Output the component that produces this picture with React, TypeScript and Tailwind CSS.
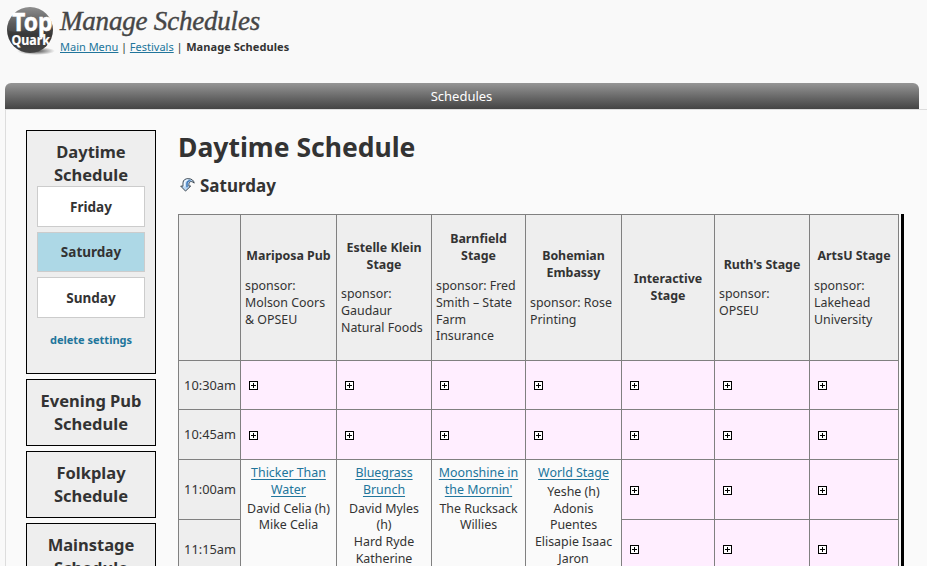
import { Fragment } from 'react';

type Stage = { name: string[]; sponsor: string[] };

const stages: Stage[] = [
  { name: ['Mariposa Pub'], sponsor: ['sponsor:', 'Molson Coors', '& OPSEU'] },
  { name: ['Estelle Klein', 'Stage'], sponsor: ['sponsor:', 'Gaudaur', 'Natural Foods'] },
  { name: ['Barnfield', 'Stage'], sponsor: ['sponsor: Fred', 'Smith – State', 'Farm', 'Insurance'] },
  { name: ['Bohemian', 'Embassy'], sponsor: ['sponsor: Rose', 'Printing'] },
  { name: ['Interactive', 'Stage'], sponsor: [] },
  { name: ["Ruth's Stage"], sponsor: ['sponsor:', 'OPSEU'] },
  { name: ['ArtsU Stage'], sponsor: ['sponsor:', 'Lakehead', 'University'] },
];

const shows = [
  { title: ['Thicker Than', 'Water'], acts: ['David Celia (h)', 'Mike Celia'] },
  { title: ['Bluegrass', 'Brunch'], acts: ['David Myles', '(h)', 'Hard Ryde', 'Katherine'] },
  { title: ['Moonshine in', "the Mornin'"], acts: ['The Rucksack', 'Willies'] },
  { title: ['World Stage'], acts: ['Yeshe (h)', 'Adonis', 'Puentes', 'Elisapie Isaac', 'Jaron'] },
];

const cell = 'border-l border-t border-[#808080]';

function Lines({ items }: { items: string[] }) {
  return (
    <>
      {items.map((t) => (
        <span key={t} className="block whitespace-nowrap">{t}</span>
      ))}
    </>
  );
}

function Slot({ last = false }: { last?: boolean }) {
  return (
    <div className={`${cell} flex items-center bg-[#ffeeff] pl-2 ${last ? 'pb-px' : 'pt-px'}`}>
      <svg width="9" height="9" viewBox="0 0 9 9" shapeRendering="crispEdges">
        <rect x="0.5" y="0.5" width="8" height="8" fill="#fff" stroke="#000" />
        <path d="M2 4.5h5M4.5 2v5" stroke="#000" />
      </svg>
    </div>
  );
}

function Time({ children }: { children: string }) {
  return <div className={`${cell} flex items-center justify-center bg-[#eeeeee] pl-px text-[12.8px]`}>{children}</div>;
}

function Logo() {
  return (
    <svg width="52" height="52" viewBox="0 0 52 52" className="shrink-0">
      <defs>
        <linearGradient id="ball" x1="0" y1="0" x2="0" y2="1">
          <stop offset="0" stopColor="#858585" />
          <stop offset="0.35" stopColor="#505050" />
          <stop offset="0.6" stopColor="#383838" />
          <stop offset="1" stopColor="#444" />
        </linearGradient>
        <radialGradient id="shade">
          <stop offset="0" stopColor="#000" stopOpacity="0.7" />
          <stop offset="1" stopColor="#000" stopOpacity="0" />
        </radialGradient>
      </defs>
      <ellipse cx="31" cy="46" rx="19" ry="4" fill="url(#shade)" />
      <circle cx="25" cy="25" r="23" fill="url(#ball)" />
      <path d="M2.5 25C12 30 22 22 47 22A22 22 0 0 0 3 22Z" fill="#fff" opacity="0.08" />
      <text x="7" y="25.5" textLength="40.5" lengthAdjust="spacingAndGlyphs" fill="#fff" stroke="#fff" strokeWidth="0.5" fontFamily="Noto Sans, sans-serif" fontWeight="700" fontSize="25">Top</text>
      <text x="6.5" y="39.5" textLength="38.5" lengthAdjust="spacingAndGlyphs" fill="#fff" stroke="#fff" strokeWidth="0.2" fontFamily="Noto Sans, sans-serif" fontWeight="700" fontSize="13.5">Quark</text>
    </svg>
  );
}

function Undo() {
  return (
    <svg width="15" height="14" viewBox="0 0 15 15" preserveAspectRatio="none">
      <path d="M.7 8.7H3V5.2C3 2.2 5.3.7 8.2.7c3.2 0 5.7 1.8 6 4.8-1.5-1.7-3.5-2.2-4.3-1.2-1 .8-1 2-1 4.4h1.8L5.5 14Z" fill="#b9d8f5" stroke="#39434e" strokeWidth="1" />
      <path d="M4.5 9V5.5C4.5 3.6 6.2 2.2 8 2" fill="none" stroke="#f2f8ff" strokeWidth="1.5" />
      <path d="M7 10V6C7 4 8 3 10.5 2.8" fill="none" stroke="#3f78b8" strokeWidth="1.5" />
    </svg>
  );
}

function Day({ name, active = false }: { name: string; active?: boolean }) {
  return (
    <div className={`flex items-center justify-center border border-[#cccccc] text-[13.5px] font-bold ${active ? 'h-[40px] bg-[#add8e6]' : 'h-[41px] bg-white pt-px'}`}>
      {name}
    </div>
  );
}

export default function App() {
  return (
    <div className="h-[566px] w-[927px] overflow-hidden bg-[#f9f9f9] font-['Noto_Sans',sans-serif] text-[12.4px] leading-[16.8px] text-[#333333]">
      <header className="flex h-[83px] pl-[5px] pt-[5px]">
        <Logo />
        <div className="pl-[3px]">
          <h1 className="h-[32px] whitespace-nowrap font-['Liberation_Serif',serif] text-[27px] italic leading-[32px] tracking-[-0.2px] text-[#464646] [-webkit-text-stroke:0.4px_#464646]">Manage Schedules</h1>
          <nav className="flex gap-[2.7px] pt-[2px] text-[11px] leading-[16px]">
            <a className="text-[#21759b] underline">Main Menu</a>
            <span>|</span>
            <a className="text-[#21759b] underline">Festivals</a>
            <span>|</span>
            <b className="pl-px tracking-[0.07px]">Manage Schedules</b>
          </nav>
        </div>
      </header>

      <div className="ml-[5px] flex h-[26px] w-[914px] items-center justify-center rounded-t-[6px] bg-linear-to-b from-[#969696] to-[#444444] pr-px text-[13px] text-white">Schedules</div>

      <main className="ml-[5px] flex h-[457px] items-start border-l border-t border-[#dddddd] bg-[#fafafa] pl-5 pt-5">
        <aside className="flex w-[130px] shrink-0 flex-col gap-[5px] text-center">
          <section className="h-[244px] border border-black bg-[#eeeeee] px-[10px] pt-[10px]">
            <h3 className="h-[45px] text-[16.5px] font-bold leading-[22.6px]"><Lines items={['Daytime', 'Schedule']} /></h3>
            <div className="flex flex-col gap-[5px]">
              <Day name="Friday" />
              <Day name="Saturday" active />
              <Day name="Sunday" />
            </div>
            <a className="mt-[14px] block text-[11px] font-bold text-[#21759b]">delete settings</a>
          </section>
          {['Evening Pub', 'Folkplay', 'Mainstage'].map((n) => (
            <section key={n} className="h-[67px] border border-black bg-[#eeeeee] pt-[10px] text-[16.5px] font-bold leading-[22.6px]">
              <Lines items={[n, 'Schedule']} />
            </section>
          ))}
        </aside>

        <div className="pl-[22px]">
          <h2 className="h-[34px] whitespace-nowrap text-[26.5px] font-bold leading-[34px]">Daytime Schedule</h2>
          <h3 className="flex h-[50px] items-start gap-[5px] pl-[2px] pt-[14px] text-[17px] font-bold leading-[16px]">
            <Undo />
            <span>Saturday</span>
          </h3>
          <div className="flex gap-[2px]">
            <div className="grid w-[721px] grid-cols-[62px_96px_95px_94px_96px_93px_95px_89px] grid-rows-[146px_49px_50px_60px_60px] border-r border-[#808080]">
              <div className={`${cell} bg-[#eeeeee]`} />
              {stages.map((s) => (
                <div key={s.name[0]} className={`${cell} flex flex-col justify-center gap-[13px] bg-[#eeeeee] px-1 pt-[1.5px]`}>
                  <div className="flex flex-col items-center font-bold"><Lines items={s.name} /></div>
                  {s.sponsor.length > 0 && <div><Lines items={s.sponsor} /></div>}
                </div>
              ))}
              {['10:30am', '10:45am'].map((t) => (
                <Fragment key={t}>
                  <Time>{t}</Time>
                  {stages.map((s) => <Slot key={s.name[0]} />)}
                </Fragment>
              ))}
              <Time>11:00am</Time>
              {shows.map((s) => (
                <div key={s.title[0]} className={`${cell} row-span-2 flex flex-col items-center gap-[2px] pt-[5px] text-center`}>
                  <a className="text-[#21759b] underline underline-offset-2"><Lines items={s.title} /></a>
                  <div><Lines items={s.acts} /></div>
                </div>
              ))}
              <Slot /><Slot /><Slot />
              <Time>11:15am</Time>
              <Slot last /><Slot last /><Slot last />
            </div>
            <div className="w-[3px] bg-black" />
          </div>
        </div>
      </main>
    </div>
  );
}
